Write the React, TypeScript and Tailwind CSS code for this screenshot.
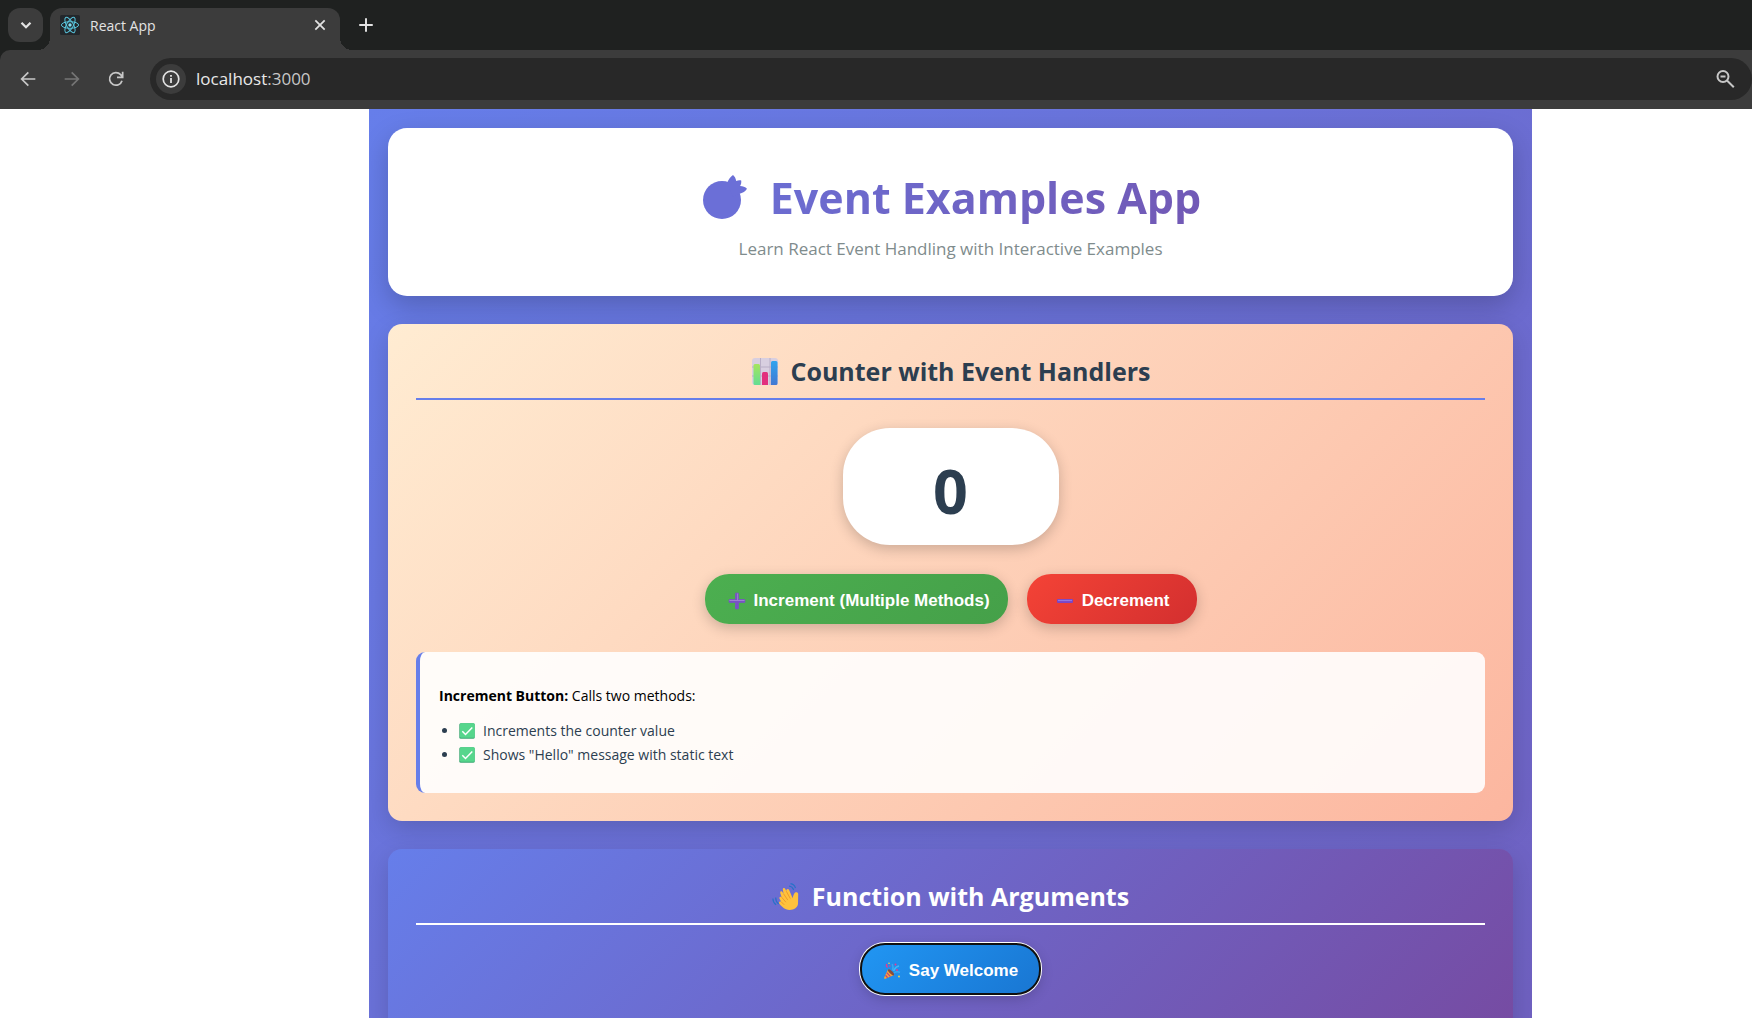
import React from "react";

function Favicon() {
  return (
    <svg viewBox="0 0 20 20" className="size-5 shrink-0" aria-hidden="true">
      <rect width="20" height="20" rx="1.500" fill="#23272b" />
      <g fill="none" stroke="#58c4dc" strokeWidth="1">
        <ellipse cx="10" cy="10" rx="8.6" ry="3.3" />
        <ellipse cx="10" cy="10" rx="8.6" ry="3.3" transform="rotate(60 10 10)" />
        <ellipse cx="10" cy="10" rx="8.6" ry="3.3" transform="rotate(120 10 10)" />
      </g>
      <circle cx="10" cy="10" r="1.7" fill="#7fdcf2" />
    </svg>
  );
}

function Stroke({ d, className, width = 2 }: { d: string; className: string; width?: number }) {
  return (
    <svg viewBox="0 0 24 24" className={className} fill="none" stroke="currentColor" strokeWidth={width} aria-hidden="true">
      <path d={d} />
    </svg>
  );
}

function Tangerine() {
  return (
    <svg viewBox="0 0 54 54" className="size-[54px] shrink-0" fill="#6b6fd7" aria-hidden="true">
      <circle cx="22" cy="29" r="19" />
      <path d="M27 12c1.500-3.500 3.500-6.500 6-8 1.700 1.300 2.800 3.500 3.200 6 1.800-.9 3.600-1.100 5-.6.3 2-.1 4-1.100 5.700 2.700 0 5.200.9 6.900 2.600-1.500 2.400-4 4.200-8 5.300L33 26Z" />
    </svg>
  );
}

function BarChart() {
  return (
    <svg viewBox="0 0 28 28" className="size-7 shrink-0" aria-hidden="true">
      <defs>
        <linearGradient id="bar-green" x1="0" y1="0" x2="0" y2="1">
          <stop offset="0" stopColor="#a5e55c" />
          <stop offset="1" stopColor="#62dd93" />
        </linearGradient>
        <linearGradient id="bar-blue" x1="0" y1="0" x2="0" y2="1">
          <stop offset="0" stopColor="#2fa4ee" />
          <stop offset="1" stopColor="#4378d2" />
        </linearGradient>
      </defs>
      <rect x="1" y="0" width="26" height="27" rx="3" fill="#d8cfe0" />
      <path d="M9.500 0v27M19 0v27M1 9h26M1 18h26" stroke="#b9aec6" strokeWidth="1" />
      <path d="M2.500 7.500a1.500 1.500 0 0 1 1.500-1.500h3.500A1.500 1.500 0 0 1 9 7.500V27H4a1.500 1.500 0 0 1-1.500-1.500Z" fill="url(#bar-green)" />
      <path d="M11 15.500a1.500 1.500 0 0 1 1.500-1.500h3a1.500 1.500 0 0 1 1.500 1.500V27h-6Z" fill="#e2307e" />
      <path d="M20 4.500A1.500 1.500 0 0 1 21.500 3H25a1.500 1.500 0 0 1 1.500 1.500v21A1.500 1.500 0 0 1 25 27h-5Z" fill="url(#bar-blue)" />
    </svg>
  );
}

function WavingHand() {
  return (
    <svg viewBox="0 0 28 28" className="size-7 shrink-0" aria-hidden="true">
      <path
        d="M14 26.300c-2.700-1-5.700-4-6.700-5.700-.8-1.600.8-2.600 2-1.600L7.600 15.800c-.8-1.800 1-2.700 2-1.500L8.300 10.200c-.5-2 1.500-2.600 2.300-1l1 1.700-.8-4.400c-.2-1.800 1.900-2.200 2.500-.6l.9 2.200c.1-2.300 2.200-2.800 2.900-1l3.600 8.100c.3-2 .9-3.400 1.600-4.700 1-2 4-1.300 3.900.7l-.2 9.500c-.2 4.500-6.300 7.600-12 5.600Z"
        fill="#ffc23c"
      />
      <path d="m9.200 18.800 3 3M9.600 14.200l4.300 5M11.600 10.900l4.200 6.200M14.300 8.200l4 7.400" stroke="#ee9b2c" strokeWidth="1" fill="none" />
      <path d="M3.700 14.500c-.2 2.700.9 4.700 3 6.500M.9 15.500c0 2.500 1.200 4.800 3.200 6.300M17 3c2 .3 3.800 1.700 4.700 3.900M18.500.6c2.500.3 4.300 2 5 4.500" stroke="#2872c8" strokeWidth="1.200" fill="none" />
    </svg>
  );
}

function PartyPopper() {
  return (
    <svg viewBox="0 0 18 18" className="size-[18px] shrink-0" aria-hidden="true">
      <path d="m5 7.500 6 5.500-8.500 3.800c-1 .4-1.600-.3-1.300-1.200Z" fill="#f5a83a" />
      <path d="m3.700 10.600 3.800 4M2.500 13.300l2.200 2.500" stroke="#c2447a" strokeWidth="1.300" />
      <ellipse cx="8" cy="10.300" rx="1.500" ry="4" transform="rotate(-45 8 10.300)" fill="#8a4b3a" />
      <path d="M9.500 8.500c1-2 .6-4.500-.2-6.500M11 11c2-1.500 4-1.500 6-.6" stroke="#3aa8f0" strokeWidth="1.500" fill="none" />
      <path d="M10.500 9C12 6.500 12.500 4.500 16 4" stroke="#41b4f7" strokeWidth="1.700" fill="none" />
      <path d="M4.500 5.500c-1.200-1-1.400-2-.8-3.500" stroke="#f0358d" strokeWidth="1.500" fill="none" />
      <g fill="#f0358d">
        <circle cx="12.500" cy="2.500" r="1" />
        <circle cx="14" cy="8" r=".9" />
        <circle cx="6.800" cy="4" r=".8" />
      </g>
      <g fill="#fcd53f">
        <circle cx="6" cy="1.300" r=".8" />
        <circle cx="16" cy="14.500" r=".9" />
      </g>
    </svg>
  );
}

function Plus() {
  return (
    <svg viewBox="0 0 18 18" className="size-[18px] shrink-0" aria-hidden="true">
      <path d="M7.700 1.200h2.600v6.500h6.500v2.600h-6.500v6.500H7.700v-6.500H1.200V7.700h6.500Z" fill="#7a52c7" stroke="#7a52c7" strokeLinejoin="round" />
      <path d="M9.600 1.500v7M1.500 8.500h15" stroke="#9c82d2" strokeWidth="1" fill="none" />
    </svg>
  );
}

function Minus() {
  return (
    <svg viewBox="0 0 18 18" className="size-[18px] shrink-0" aria-hidden="true">
      <rect x="1" y="7" width="16" height="4" rx="1" fill="#7a45c6" />
      <path d="M2 8.500h14" stroke="#9277e0" strokeWidth="1.200" />
    </svg>
  );
}

function Check() {
  return (
    <svg viewBox="0 0 16 16" className="mr-2 inline size-4 align-[-3px]" aria-hidden="true">
      <rect x=".3" y=".3" width="15.400" height="15.400" rx="1.500" fill="#3aa873" />
      <rect x="1" y=".3" width="14.700" height="14.500" rx="1.200" fill="#56d68c" />
      <path d="m3.300 8.300 3.200 3.200 6.800-7" stroke="#fff" strokeWidth="1.500" fill="none" />
    </svg>
  );
}

const buttonBase =
  "flex h-[50px] items-center gap-2 rounded-3xl pt-[3px] font-['Liberation_Sans',sans-serif] text-[17px] font-bold text-white shadow-[0_4px_14px_rgba(0,0,0,0.2)]";

function Browser() {
  return (
    <header className="shrink-0 bg-[#1f2120] font-['Open_Sans',sans-serif]">
      <div className="flex h-[50px] items-end pl-2">
        <button aria-label="Search tabs" className="mb-2 flex h-[34px] w-[35px] items-center justify-center rounded-xl bg-[#3c3c3c] text-[#e3e3e3]">
          <Stroke d="m6 9 6 6 6-6" className="size-[18px]" width={3} />
        </button>
        <div className="relative ml-[7px] flex h-[42px] w-[290px] items-center rounded-t-xl bg-[#3c3c3c] pr-3 pb-2 pl-[10px] text-[#e3e3e3]">
          <span className="absolute bottom-0 -left-3 size-3 bg-[radial-gradient(circle_at_0_0,transparent_12px,#3c3c3c_12px)]" />
          <span className="absolute -right-3 bottom-0 size-3 bg-[radial-gradient(circle_at_100%_0,transparent_12px,#3c3c3c_12px)]" />
          <Favicon />
          <span className="ml-[10px] flex-1 text-[14px]">React App</span>
          <button aria-label="Close tab">
            <Stroke d="m5 5 14 14M19 5 5 19" className="size-4" width={2.6} />
          </button>
        </div>
        <button aria-label="New tab" className="mb-4 ml-[17px] text-[#e3e3e3]">
          <Stroke d="M12 3v18M3 12h18" className="size-[18px]" width={2.6} />
        </button>
      </div>
      <div className="flex h-[59px] items-center rounded-tl-[10px] bg-[#3c3c3c] pb-px pl-4">
        <nav className="flex gap-5 text-[#c7c7c7]">
          <button aria-label="Back">
            <Stroke d="M23 12H3M12.500 2 2.500 12l10 10" className="size-6 p-1" width={2.6} />
          </button>
          <button aria-label="Forward" className="text-[#757575]">
            <Stroke d="M1 12h20M11.500 2l10 10-10 10" className="size-6 p-1" width={2.6} />
          </button>
          <button aria-label="Reload">
            <Stroke d="M21 14.500A9.500 9.500 0 1 1 19 5.500L21.500 8.500M22 1v8.500H13.500" className="size-6 p-1" width={2.6} />
          </button>
        </nav>
        <div className="ml-[22px] flex h-[42px] flex-1 items-center rounded-full bg-[#282828] pr-[17px] pl-[6px]">
          <button aria-label="Site information" className="flex size-[30px] items-center justify-center rounded-full bg-[#3c3c3c] text-[#e3e3e3]">
            <svg viewBox="0 0 18 18" className="size-[18px]" aria-hidden="true">
              <circle cx="9" cy="9" r="7.800" fill="none" stroke="currentColor" strokeWidth="1.700" />
              <path d="M8.100 8h1.800v5H8.100zM8.100 5h1.800v1.800H8.100z" fill="currentColor" />
            </svg>
          </button>
          <button className="ml-[10px] text-[17px] text-[#c7c7c7]">
            <span className="text-[#e8e8e8]">localhost</span>:3000
          </button>
          <button aria-label="Zoom" className="ml-auto text-[#c7c7c7]">
            <svg viewBox="0 0 20 20" className="size-5" fill="none" stroke="currentColor" strokeWidth="2" aria-hidden="true">
              <circle cx="8" cy="7.500" r="5.500" />
              <path d="m12 11.500 6.800 6.800M5.500 7.500h5" />
            </svg>
          </button>
        </div>
      </div>
    </header>
  );
}

export default function App() {
  return (
    <div className="flex h-screen flex-col overflow-hidden bg-white font-['Open_Sans',sans-serif]">
      <Browser />
      <main className="ml-[369px] min-h-0 max-w-[1163px] flex-1 overflow-hidden bg-[linear-gradient(135deg,#667eea,#764ba2)] bg-[length:100%_2440px] p-[19px]">
        <header className="mb-7 rounded-[19px] bg-white px-7 pt-[39px] pb-[35px] text-center shadow-[0_10px_28px_rgba(0,0,0,0.2)]">
          <h1 className="flex items-center justify-center gap-4 bg-[linear-gradient(135deg,#667eea,#764ba2)] bg-clip-text text-[43px] leading-[62px] font-bold text-transparent">
            <Tangerine />
            Event Examples App
          </h1>
          <p className="mt-2 text-[17px] leading-6 text-[#7f8c8d]">Learn React Event Handling with Interactive Examples</p>
        </header>

        <section className="mb-7 rounded-[14px] bg-[linear-gradient(135deg,#ffecd2,#fcb69f)] p-7 shadow-[0_8px_24px_rgba(0,0,0,0.15)]">
          <h2 className="flex h-12 items-center justify-center gap-3 border-b-2 border-[#667eea] pb-[6px] text-[25px] font-bold text-[#2c3e50]">
            <BarChart />
            Counter with Event Handlers
          </h2>
          <output className="mx-auto mt-7 flex h-[117px] w-[216px] items-center justify-center rounded-[47px] bg-white pt-2 text-[61px] font-bold text-[#2c3e50] shadow-[0_4px_14px_rgba(0,0,0,0.2)]">
            0
          </output>
          <div className="mt-[29px] flex justify-center gap-[19px]">
            <button className={`${buttonBase} bg-[linear-gradient(135deg,#4caf50,#45a049)] pr-[18px] pl-[23px]`}>
              <Plus />
              Increment (Multiple Methods)
            </button>
            <button className={`${buttonBase} bg-[linear-gradient(135deg,#f44336,#d32f2f)] pr-[27px] pl-[29px]`}>
              <Minus />
              Decrement
            </button>
          </div>
          <div className="mt-7 rounded-[9px] border-l-4 border-[#667eea] bg-white/90 px-[19px] pt-8 pb-[26px] text-[14px] leading-6">
            <p className="mb-[11px] text-black">
              <strong>Increment Button:</strong> Calls two methods:
            </p>
            <ul className="list-disc pl-5 text-[#2c3e50]">
              <li>
                <Check />
                Increments the counter value
              </li>
              <li>
                <Check />
                Shows "Hello" message with static text
              </li>
            </ul>
          </div>
        </section>

        <section className="rounded-[14px] bg-[linear-gradient(135deg,#667eea,#764ba2)] px-7 pt-7 pb-[37px] shadow-[0_8px_24px_rgba(0,0,0,0.15)]">
          <h2 className="flex h-12 items-center justify-center gap-3 border-b-2 border-white pb-[6px] text-[25px] font-bold text-white">
            <WavingHand />
            Function with Arguments
          </h2>
          <button
            className={`${buttonBase} mx-auto mt-[19px] bg-[linear-gradient(135deg,#2196f3,#1976d2)] px-[22px] ring-2 ring-white outline-2 -outline-offset-1 outline-[#101010]`}
          >
            <PartyPopper />
            Say Welcome
          </button>
        </section>
      </main>
    </div>
  );
}
